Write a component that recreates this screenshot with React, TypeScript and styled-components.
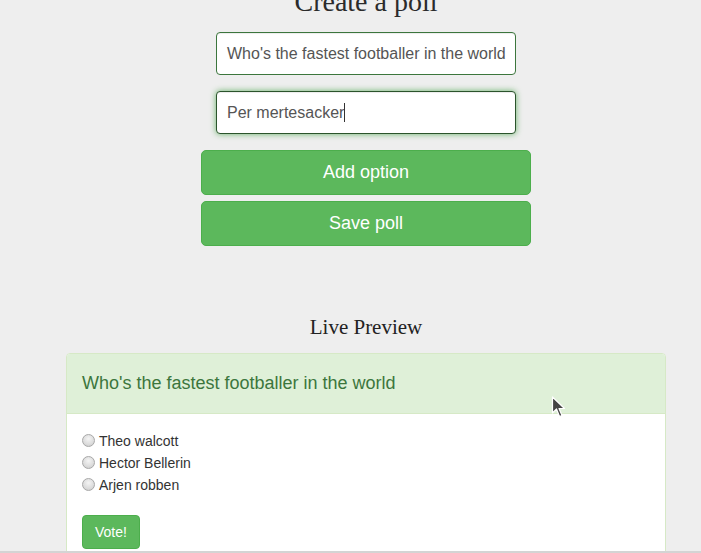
import React from "react";
import styled, { createGlobalStyle } from "styled-components";

const Global = createGlobalStyle`
  html, body { margin: 0; padding: 0; background: #eeeeee; overflow: hidden; }
  body { font-family: "Liberation Sans", Arial, sans-serif; color: #333; }
`;

const Page = styled.div`
  width: 600px;
  margin-left: 66px;
  margin-top: -12px;
  display: flex;
  flex-direction: column;
  align-items: center;
`;

const Title = styled.h1<{ $size: number }>`
  margin: 0;
  font-family: "Liberation Serif", "Times New Roman", serif;
  font-weight: normal;
  font-size: ${(p) => p.$size}px;
  line-height: ${(p) => p.$size}px;
  color: #2b2b2b;
`;

const Form = styled.div`
  display: flex;
  flex-direction: column;
  align-items: center;
  margin-top: 16px;
  width: 330px;
`;

const Field = styled.div<{ $focus?: boolean }>`
  box-sizing: border-box;
  width: 300px;
  height: 43px;
  padding: 0 10px;
  display: flex;
  align-items: center;
  background: #fff;
  border: 1px solid ${(p) => (p.$focus ? "#2b542c" : "#3c763d")};
  border-radius: 4px;
  box-shadow: ${(p) =>
    p.$focus
      ? "inset 0 1px 1px rgba(0,0,0,.075), 0 0 6px #67b168"
      : "inset 0 1px 1px rgba(0,0,0,.075)"};
  font-size: 16px;
  color: #555;
  white-space: nowrap;
  overflow: hidden;
  margin-bottom: 16px;
`;

const Caret = styled.span`
  display: inline-block;
  width: 1px;
  height: 19px;
  background: #333;
`;

const BigButton = styled.button`
  box-sizing: border-box;
  width: 330px;
  height: 45px;
  border: 1px solid #4cae4c;
  border-radius: 5px;
  background: #5cb85c;
  color: #fff;
  font-family: "Liberation Sans", Arial, sans-serif;
  font-size: 18px;
  cursor: pointer;
  & + & { margin-top: 6px; }
`;

const SubTitle = styled.h2`
  margin: 69px 0 0;
  font-family: "Liberation Serif", "Times New Roman", serif;
  font-weight: normal;
  font-size: 21px;
  line-height: 24px;
  color: #222;
`;

const Panel = styled.div`
  box-sizing: border-box;
  width: 600px;
  margin-top: 14px;
  background: #fff;
  border: 1px solid #d6e9c6;
  border-radius: 4px;
`;

const PanelHeading = styled.div`
  padding: 19px 15px 20px;
  background: #dff0d8;
  border-bottom: 1px solid #d6e9c6;
  border-radius: 3px 3px 0 0;
  color: #3c763d;
  font-size: 18px;
  line-height: 20px;
`;

const PanelBody = styled.div`
  padding: 16px 15px 15px;
  display: flex;
  flex-direction: column;
  align-items: flex-start;
`;

const Option = styled.label`
  display: flex;
  align-items: center;
  height: 22px;
  font-size: 14px;
  color: #333;
`;

const Radio = styled.span`
  box-sizing: border-box;
  width: 13px;
  height: 13px;
  border-radius: 50%;
  border: 1px solid #a8a8a8;
  background: radial-gradient(circle at 50% 35%, #f4f4f4 0%, #dcdcdc 60%, #c8c8c8 100%);
  margin-right: 4px;
  margin-top: -2px;
`;

const VoteButton = styled.button`
  margin-top: 19px;
  padding: 6px 12px;
  font-family: "Liberation Sans", Arial, sans-serif;
  font-size: 14px;
  line-height: 20px;
  border: 1px solid #4cae4c;
  border-radius: 4px;
  background: #5cb85c;
  color: #fff;
`;

const Pointer = styled.svg`
  position: fixed;
  left: 551px;
  top: 396px;
`;

const BottomEdge = styled.div`
  position: fixed;
  left: 0;
  right: 0;
  bottom: 0;
  height: 2px;
  background: #d4d4d4;
`;

const options = ["Theo walcott", "Hector Bellerin", "Arjen robben"];

export default function App() {
  return (
    <>
      <Global />
      <Page>
        <Title $size={28}>Create a poll</Title>
        <Form>
          <Field>Who's the fastest footballer in the world</Field>
          <Field $focus>
            Per mertesacker
            <Caret />
          </Field>
          <BigButton>Add option</BigButton>
          <BigButton>Save poll</BigButton>
        </Form>
        <SubTitle>Live Preview</SubTitle>
        <Panel>
          <PanelHeading>Who's the fastest footballer in the world</PanelHeading>
          <PanelBody>
            {options.map((o) => (
              <Option key={o}>
                <Radio />
                {o}
              </Option>
            ))}
            <VoteButton>Vote!</VoteButton>
          </PanelBody>
        </Panel>
      </Page>
      <Pointer width="15" height="23" viewBox="0 0 15 23">
        <path d="M1.5 1 L1.5 17 L5.5 13 L8.5 20.5 L11 19.5 L8 12.5 L13.5 12.5 Z" fill="#444" stroke="#fff" strokeWidth="1.2" strokeLinejoin="round" />
      </Pointer>
      <BottomEdge />
    </>
  );
}
